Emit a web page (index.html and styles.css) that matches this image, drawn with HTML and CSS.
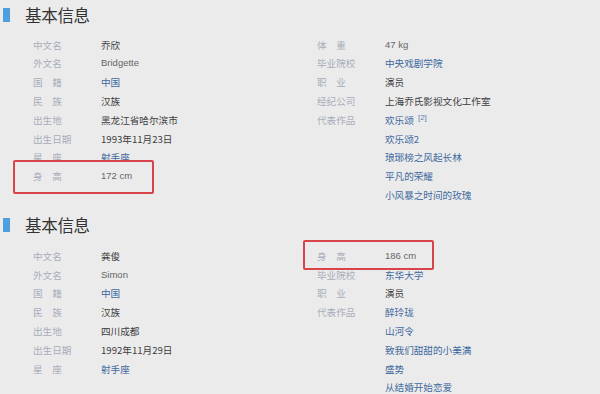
FILE: index.html
```html
<!DOCTYPE html>
<html lang="zh">
<head>
<meta charset="utf-8">
<link rel="stylesheet" href="styles.css">
</head>
<body>
<section class="card first">
  <h2 class="title"><span class="bar"></span>基本信息</h2>
  <div class="cols">
    <dl class="col">
      <div class="row"><dt>中文名</dt><dd>乔欣</dd></div>
      <div class="row"><dt>外文名</dt><dd class="latin">Bridgette</dd></div>
      <div class="row"><dt>国　籍</dt><dd class="link">中国</dd></div>
      <div class="row"><dt>民　族</dt><dd>汉族</dd></div>
      <div class="row"><dt>出生地</dt><dd>黑龙江省哈尔滨市</dd></div>
      <div class="row"><dt>出生日期</dt><dd>1993年11月23日</dd></div>
      <div class="row"><dt>星　座</dt><dd class="link">射手座</dd></div>
      <div class="row mark mark-a"><dt>身　高</dt><dd class="latin">172 cm</dd></div>
    </dl>
    <dl class="col">
      <div class="row"><dt>体　重</dt><dd class="latin">47 kg</dd></div>
      <div class="row"><dt>毕业院校</dt><dd class="link">中央戏剧学院</dd></div>
      <div class="row"><dt>职　业</dt><dd>演员</dd></div>
      <div class="row"><dt>经纪公司</dt><dd>上海乔氏影视文化工作室</dd></div>
      <div class="row"><dt>代表作品</dt><dd class="link">欢乐颂 <sup class="ref">[2]</sup></dd></div>
      <div class="row"><dt></dt><dd class="link">欢乐颂2</dd></div>
      <div class="row"><dt></dt><dd class="link">琅琊榜之风起长林</dd></div>
      <div class="row"><dt></dt><dd class="link">平凡的荣耀</dd></div>
      <div class="row"><dt></dt><dd class="link">小风暴之时间的玫瑰</dd></div>
    </dl>
  </div>
</section>
<section class="card second">
  <h2 class="title"><span class="bar"></span>基本信息</h2>
  <div class="cols">
    <dl class="col">
      <div class="row"><dt>中文名</dt><dd>龚俊</dd></div>
      <div class="row"><dt>外文名</dt><dd class="latin">Simon</dd></div>
      <div class="row"><dt>国　籍</dt><dd class="link">中国</dd></div>
      <div class="row"><dt>民　族</dt><dd>汉族</dd></div>
      <div class="row"><dt>出生地</dt><dd>四川成都</dd></div>
      <div class="row"><dt>出生日期</dt><dd>1992年11月29日</dd></div>
      <div class="row"><dt>星　座</dt><dd class="link">射手座</dd></div>
    </dl>
    <dl class="col">
      <div class="row mark mark-b"><dt>身　高</dt><dd class="latin">186 cm</dd></div>
      <div class="row"><dt>毕业院校</dt><dd class="link">东华大学</dd></div>
      <div class="row"><dt>职　业</dt><dd>演员</dd></div>
      <div class="row"><dt>代表作品</dt><dd class="link">醉玲珑</dd></div>
      <div class="row"><dt></dt><dd class="link">山河令</dd></div>
      <div class="row"><dt></dt><dd class="link">致我们甜甜的小美满</dd></div>
      <div class="row"><dt></dt><dd class="link">盛势</dd></div>
      <div class="row"><dt></dt><dd class="link">从结婚开始恋爱</dd></div>
    </dl>
  </div>
</section>
</body>
</html>
```
FILE: styles.css
```css
html, body {
  margin: 0;
  padding: 0;
  background: #ebebeb;
  font-family: "Noto Sans CJK SC", "Liberation Sans", sans-serif;
}
body {
  width: 600px;
  height: 394px;
  overflow: hidden;
}
.card {
  display: flex;
  flex-direction: column;
}
.first {
  padding-top: 5px;
}
.second {
  padding-top: 10px;
}
.title {
  margin: 0;
  display: flex;
  align-items: center;
  gap: 15px;
  padding-left: 3px;
  height: 20px;
  font-size: 16.5px;
  font-weight: normal;
  color: #333;
  letter-spacing: -0.3px;
}
.bar {
  display: block;
  width: 7px;
  height: 14px;
  background: #4e9fe0;
}
.cols {
  display: grid;
  grid-template-columns: 284px 284px;
  padding-left: 33px;
}
.first .cols {
  padding-top: 10.6px;
}
.second .cols {
  padding-top: 12px;
}
.col {
  margin: 0;
  display: flex;
  flex-direction: column;
}
.row {
  display: flex;
  height: 18.8px;
  line-height: 18.8px;
  font-size: 9.6px;
}
dt {
  width: 68px;
  flex: none;
  color: #a9adbb;
}
dd {
  margin: 0;
  color: #3d3d3d;
}
.latin {
  font-family: "Liberation Sans", sans-serif;
  font-size: 9.5px;
  color: #666;
}
.link {
  color: #40699e;
}
.ref {
  font-family: "Liberation Sans", sans-serif;
  font-size: 8px;
  vertical-align: 4px;
  line-height: 0;
  margin-left: 2px;
  color: #5b7fb0;
}
.mark {
  position: relative;
}
.mark::after {
  content: "";
  position: absolute;
  border: 2px solid #d9444b;
  border-radius: 2px;
  box-sizing: border-box;
}
.mark-a::after {
  left: -20px;
  top: -7px;
  width: 141px;
  height: 34px;
}
.mark-b::after {
  left: -14px;
  top: -7px;
  width: 131px;
  height: 30px;
}
```
